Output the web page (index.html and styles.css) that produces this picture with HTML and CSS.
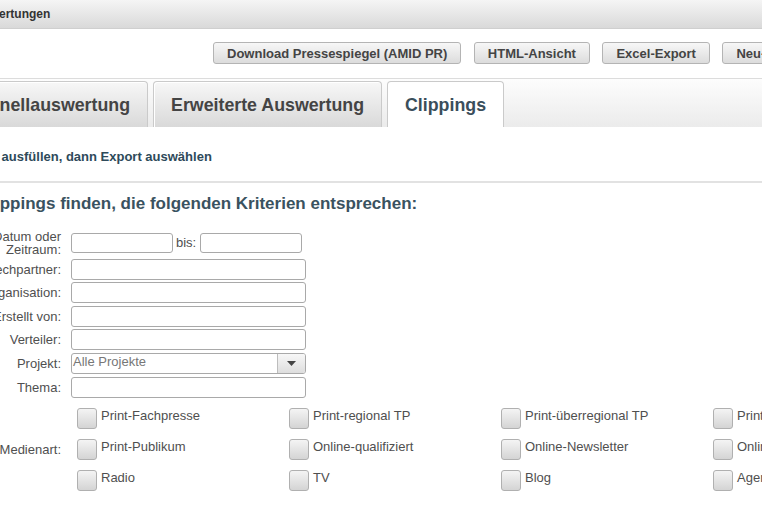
FILE: index.html
```html
<!DOCTYPE html>
<html lang="de">
<head>
<meta charset="utf-8">
<title>Auswertungen</title>
<link rel="stylesheet" href="styles.css">
</head>
<body>
<div class="page">
  <div class="topbar">Auswertungen</div>
  <div class="actions">
    <button class="btn">Download Pressespiegel (AMID PR)</button>
    <button class="btn">HTML-Ansicht</button>
    <button class="btn">Excel-Export</button>
    <button class="btn">Neu-Export</button>
  </div>
  <div class="tabstrip">
    <div class="tab">Schnellauswertung</div>
    <div class="tab">Erweiterte Auswertung</div>
    <div class="tab active">Clippings</div>
  </div>
  <p class="hint">Felder ausfüllen, dann Export auswählen</p>
  <hr class="sep">
  <h2 class="title">Clippings finden, die folgenden Kriterien entsprechen:</h2>
  <div class="form">
    <div class="row first">
      <label class="lbl">Datum oder<br>Zeitraum:</label>
      <div class="pair">
        <input class="inp short" type="text">
        <span class="bis">bis:</span>
        <input class="inp short" type="text">
      </div>
    </div>
    <div class="row"><label class="lbl">Sprechpartner:</label><input class="inp" type="text"></div>
    <div class="row"><label class="lbl">Organisation:</label><input class="inp" type="text"></div>
    <div class="row"><label class="lbl">Erstellt von:</label><input class="inp" type="text"></div>
    <div class="row"><label class="lbl">Verteiler:</label><input class="inp" type="text"></div>
    <div class="row"><label class="lbl">Projekt:</label>
      <div class="select"><span class="sel-text">Alle Projekte</span><span class="sel-btn"><svg width="9" height="5" viewBox="0 0 9 5"><path d="M0 0h9L4.5 5z" fill="#444"/></svg></span></div>
    </div>
    <div class="row"><label class="lbl">Thema:</label><input class="inp" type="text"></div>
    <div class="row media">
      <label class="lbl">Medienart:</label>
      <div class="checks">
        <div class="chk"><span class="box"></span><span>Print-Fachpresse</span></div>
        <div class="chk"><span class="box"></span><span>Print-regional TP</span></div>
        <div class="chk"><span class="box"></span><span>Print-überregional TP</span></div>
        <div class="chk"><span class="box"></span><span>Print-Sonstige</span></div>
        <div class="chk"><span class="box"></span><span>Print-Publikum</span></div>
        <div class="chk"><span class="box"></span><span>Online-qualifiziert</span></div>
        <div class="chk"><span class="box"></span><span>Online-Newsletter</span></div>
        <div class="chk"><span class="box"></span><span>Online-Sonstige</span></div>
        <div class="chk"><span class="box"></span><span>Radio</span></div>
        <div class="chk"><span class="box"></span><span>TV</span></div>
        <div class="chk"><span class="box"></span><span>Blog</span></div>
        <div class="chk"><span class="box"></span><span>Agentur</span></div>
      </div>
    </div>
  </div>
</div>
</body>
</html>
```
FILE: styles.css
```css
html, body {
  margin: 0;
  padding: 0;
  background: #fff;
  overflow: hidden;
  font-family: "Liberation Sans", Arial, sans-serif;
}
.page {
  margin-left: -50px;
  width: 960px;
}
.topbar {
  height: 28px;
  line-height: 29px;
  padding-left: 17px;
  font-size: 12px;
  font-weight: bold;
  color: #333;
  background: linear-gradient(#f5f5f5, #d9d9d9);
  border-bottom: 1px solid #cfcfcf;
}
.actions {
  display: flex;
  gap: 12.5px;
  padding: 13px 0 0 263px;
  height: 22px;
}
.btn {
  height: 22px;
  padding: 0 13px;
  border: 1px solid #b4b4b4;
  border-radius: 3px;
  background: linear-gradient(#f7f7f7, #dcdcdc);
  font-family: "Liberation Sans", Arial, sans-serif;
  font-size: 13px;
  font-weight: bold;
  color: #444;
  white-space: nowrap;
  flex-shrink: 0;
}
.tabstrip {
  margin-top: 14px;
  border-top: 1px solid #dcdcdc;
  padding-top: 2px;
  height: 46px;
  display: flex;
  gap: 5px;
  background: linear-gradient(#fdfdfd, #ebebeb);
}
.tab {
  height: 45px;
  line-height: 46px;
  padding: 0 17px;
  border: 1px solid #cacaca;
  border-bottom: none;
  border-radius: 4px 4px 0 0;
  font-size: 17.8px;
  font-weight: bold;
  color: #444;
  background: linear-gradient(#f7f7f7, #d9d9d9);
  box-shadow: inset 1px 1px 0 #fff;
  white-space: nowrap;
}
.tab:first-child {
  margin-left: -1px;
}
.tab.active {
  background: #fff;
  color: #3a4e5b;
}
.hint {
  margin: 22px 0 0 9px;
  font-size: 13px;
  line-height: 16px;
  font-weight: bold;
  color: #2e4a5a;
}
.sep {
  margin: 16px 0 0 0;
  border: none;
  height: 2px;
  background: #e2e2e2;
}
.title {
  margin: 11px 0 0 28px;
  font-size: 17px;
  line-height: 20px;
  font-weight: bold;
  color: #3a5260;
}
.form {
  margin-top: 15px;
  display: flex;
  flex-direction: column;
  gap: 2.6px;
}
.row {
  display: grid;
  grid-template-columns: 111px auto;
  column-gap: 10px;
  align-items: center;
}
.row.first {
  height: 27px;
}
.lbl {
  text-align: right;
  font-size: 13px;
  line-height: 13px;
  color: #4f4f4f;
}
.pair {
  display: flex;
  align-items: center;
}
.inp {
  box-sizing: border-box;
  width: 235px;
  height: 21px;
  margin: 0;
  border: 1px solid #a9a9a9;
  border-radius: 3px;
  background: #fff;
}
.inp.short {
  width: 102px;
  height: 20px;
}
.bis {
  font-size: 13px;
  color: #4f4f4f;
  margin: 0 2px 0 3px;
  width: 22px;
}
.select {
  box-sizing: border-box;
  width: 235px;
  height: 21px;
  border: 1px solid #a9a9a9;
  border-radius: 3px;
  display: flex;
  overflow: hidden;
}
.sel-text {
  flex: 1;
  font-size: 13px;
  line-height: 16px;
  color: #777;
  padding-left: 1px;
}
.sel-btn {
  width: 27px;
  border-left: 1px solid #bdbdbd;
  background: linear-gradient(#f7f7f7, #dedede);
  display: flex;
  align-items: center;
  justify-content: center;
}
.row.media {
  margin-top: 8px;
}
.checks {
  margin-left: 6px;
  display: grid;
  grid-template-columns: repeat(4, 212px);
  row-gap: 10px;
}
.chk {
  display: flex;
  align-items: flex-start;
  gap: 4px;
  font-size: 13px;
  line-height: 16px;
  color: #4f4f4f;
  white-space: nowrap;
}
.box {
  box-sizing: border-box;
  width: 20px;
  height: 21px;
  border: 1px solid #b0b0b0;
  border-radius: 3px;
  background: linear-gradient(#f4f4f4, #d4d4d4);
  flex-shrink: 0;
}
```
